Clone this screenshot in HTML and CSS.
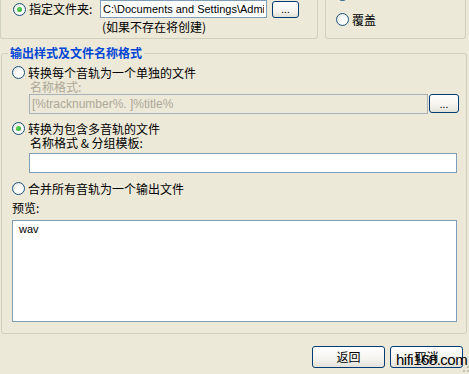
FILE: index.html
```html
<!DOCTYPE html>
<html lang="zh-CN">
<head>
  <meta charset="UTF-8" />
  <title>输出格式</title>
  <link rel="stylesheet" href="styles.css">
</head>
<body>

  <div class="top">
    <div class="group top-left">
      <div class="folder-row">
        <span class="radio checked"></span>
        <label class="folder-label">指定文件夹:</label>
        <input type="text" class="field folder-input" value="C:\Documents and Settings\Administrator\My Documents" />
        <button class="xp-btn small-btn">...</button>
      </div>
      <div class="hint">(如果不存在将创建)</div>
    </div>
    <div class="group top-right">
      <div class="opt opt-cut"><span class="radio checked"></span></div>
      <div class="opt"><span class="radio"></span><span>覆盖</span></div>
    </div>
  </div>

  <div class="group main">
    <div class="legend">输出样式及文件名称格式</div>

    <div class="opt first"><span class="radio"></span><span>转换每个音轨为一个单独的文件</span></div>
    <div class="sub-label disabled">名称格式:</div>
    <div class="pattern-row">
      <input type="text" class="field off" value="[%tracknumber%. ]%title%" disabled />
      <button class="xp-btn pattern-btn">...</button>
    </div>

    <div class="opt second"><span class="radio checked"></span><span>转换为包含多音轨的文件</span></div>
    <div class="sub-label">名称格式 &amp; 分组模板:</div>
    <input type="text" class="field group-input" />

    <div class="opt third"><span class="radio"></span><span>合并所有音轨为一个输出文件</span></div>

    <div class="preview-label">预览:</div>
    <div class="preview">wav</div>
  </div>

  <div class="actions">
    <button class="xp-btn action-btn">返回</button>
    <button class="xp-btn action-btn cancel">取消<span class="watermark">hifi168.com</span></button>
    <svg class="grip" width="6" height="8" viewBox="0 0 6 8">
      <rect x="4" y="0" width="2" height="2" fill="#C4C1B2"/>
      <rect x="0" y="4" width="2" height="2" fill="#C4C1B2"/>
      <rect x="4" y="4" width="2" height="2" fill="#C4C1B2"/>
    </svg>
  </div>

</body>
</html>
```

FILE: styles.css
```css
body {
  margin: 0;
  width: 469px;
  height: 374px;
  overflow: hidden;
  background-color: #ECE9D8;
  font-family: "Noto Sans CJK SC", "Liberation Sans", sans-serif;
  font-size: 12px;
  color: #000;
}

.group {
  border: 1px solid #D0D0BF;
  border-radius: 3px;
  box-sizing: border-box;
}

/* top row, its group boxes are cut off above */
.top {
  display: flex;
  height: 39px;
}

.top-left {
  width: 318px;
  height: 39px;
  border-top: none;
  border-radius: 0 0 3px 3px;
}

.top-right {
  width: 141px;
  height: 39px;
  margin-left: 7px;
  border-top: none;
  border-radius: 0 0 3px 3px;
  display: flex;
  flex-direction: column;
  gap: 10px;
  padding-left: 10px;
}

.folder-row {
  display: flex;
  align-items: center;
  height: 18px;
  padding-left: 12px;
}

.folder-label {
  width: 71px;
  margin-left: 3px;
  line-height: 14px;
}

.field {
  box-sizing: border-box;
  border: 1px solid #7F9DB9;
  background: #fff;
  font-family: "Liberation Sans", Tahoma, sans-serif;
  font-size: 11px;
  padding: 0 2px;
  margin: 0;
  outline: none;
}

.folder-input {
  width: 167px;
  height: 18px;
}

.hint {
  margin: 2px 0 0 101px;
  line-height: 14px;
}

.opt {
  display: flex;
  align-items: center;
  height: 15px;
  gap: 3px;
  line-height: 15px;
}

.opt-cut {
  margin-top: -13px;
}

.radio {
  width: 13px;
  height: 13px;
  box-sizing: border-box;
  border: 1px solid #1C5180;
  border-radius: 50%;
  background: radial-gradient(circle at 65% 65%, #fff 0, #fff 30%, #DCDBD4 100%);
  flex: none;
  position: relative;
}

.radio.checked::after {
  content: "";
  position: absolute;
  left: 3px;
  top: 3px;
  width: 5px;
  height: 5px;
  border-radius: 50%;
  background: radial-gradient(circle at 40% 40%, #5FD95F, #21A121);
}

/* xp style buttons */
.xp-btn {
  box-sizing: border-box;
  border: 1px solid #003C74;
  border-radius: 3px;
  background: linear-gradient(#FFFFFF, #F4F3EE 60%, #E3E2D9);
  font-family: "Noto Sans CJK SC", "Liberation Sans", sans-serif;
  font-size: 12px;
  padding: 0;
  color: #000;
}

.small-btn {
  width: 27px;
  height: 17px;
  margin-left: 5px;
  font-size: 10px;
  line-height: 10px;
}

/* main group */
.main {
  width: 466px;
  margin: 14px 0 0 1px;
  padding: 0 0 10px 10px;
  height: 281px;
}

.legend {
  width: fit-content;
  margin: -8px 0 0 -4px;
  padding: 0 2px;
  background: #ECE9D8;
  color: #0046D5;
  font-weight: bold;
  line-height: 14px;
}

.first {
  margin-top: 5px;
}

.sub-label {
  margin-left: 18px;
  line-height: 14px;
}

.disabled {
  color: #ACA899;
}

.pattern-row {
  display: flex;
  align-items: flex-start;
  margin-left: 17px;
}

.off {
  width: 399px;
  height: 20px;
  background: #ECE9D8;
  border-color: #A6B1B8;
  color: #ACA899;
  font-size: 12px;
}

.pattern-btn {
  width: 30px;
  height: 19px;
  margin-left: 1px;
  font-size: 10px;
  line-height: 10px;
}

.second {
  margin-top: 7px;
}

.group-input {
  display: block;
  width: 428px;
  height: 20px;
  margin: 3px 0 0 17px;
}

.third {
  margin-top: 8px;
}

.preview-label {
  margin-top: 5px;
  line-height: 14px;
}

.preview {
  box-sizing: border-box;
  width: 445px;
  height: 102px;
  margin-top: 5px;
  border: 1px solid #7F9DB9;
  background: #fff;
  font-family: "Liberation Sans", Tahoma, sans-serif;
  font-size: 11px;
  line-height: 14px;
  padding: 1px 6px;
}

/* bottom buttons */
.actions {
  display: flex;
  justify-content: flex-end;
  gap: 5px;
  margin-top: 12px;
  padding-right: 6px;
  position: relative;
}

.action-btn {
  width: 73px;
  height: 22px;
  line-height: 18px;
}

.cancel {
  position: relative;
}

.watermark {
  position: absolute;
  left: 5px;
  bottom: -1px;
  font-family: "Liberation Sans", sans-serif;
  font-size: 15px;
  line-height: 16px;
  color: #000;
  letter-spacing: -0.5px;
}

.grip {
  position: absolute;
  right: 0;
  top: 20px;
}
```
